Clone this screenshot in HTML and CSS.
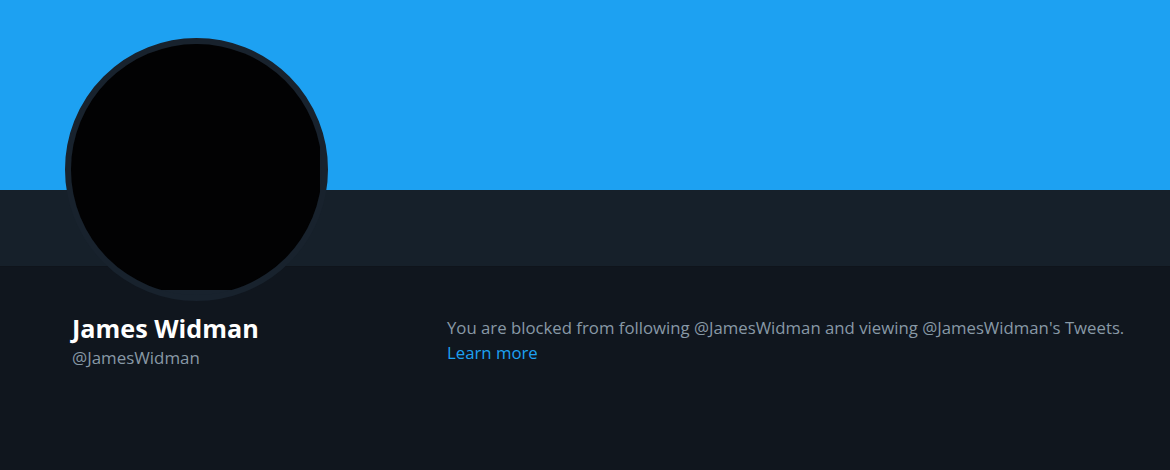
FILE: index.html
```html
<!DOCTYPE html>
<html lang="en">
<head>
<meta charset="utf-8">
<title>James Widman</title>
<link rel="stylesheet" href="styles.css">
</head>
<body>
<div class="page">
  <div class="banner"></div>
  <div class="navband"></div>
  <div class="avatar"><div class="avatar-clip"><div class="avatar-img"></div></div></div>
  <div class="content">
    <div class="profile">
      <div class="name">James Widman</div>
      <div class="handle">@JamesWidman</div>
    </div>
    <div class="notice">
      <p class="msg">You are blocked from following @JamesWidman and viewing @JamesWidman's Tweets.</p>
      <a class="learn" href="#">Learn more</a>
    </div>
  </div>
</div>
</body>
</html>
```
FILE: styles.css
```css
html, body {
  margin: 0;
  padding: 0;
  background: #10161e;
}
.page {
  position: relative;
  width: 1170px;
  height: 470px;
  overflow: hidden;
  font-family: "Open Sans", "Noto Sans", sans-serif;
  background: #10161e;
}
.banner {
  height: 190px;
  background: #1da1f2;
}
.navband {
  height: 76px;
  background: #16202a;
  border-bottom: 1px solid #0f141b;
}
.avatar {
  position: absolute;
  left: 65px;
  top: 38px;
  width: 251px;
  height: 251px;
  border: 6px solid #18222d;
  border-radius: 50%;
  background: #18222d;
}
.avatar-clip {
  width: 249px;
  height: 246px;
  overflow: hidden;
}
.avatar-img {
  width: 251px;
  height: 251px;
  border-radius: 50%;
  background: #020203;
}
.content {
  display: flex;
  padding-left: 72px;
}
.profile {
  width: 375px;
  padding-top: 45px;
}
.name {
  font-size: 25.2px;
  line-height: 32px;
  font-weight: 700;
  color: #ffffff;
}
.handle {
  margin-top: 2px;
  font-size: 16.9px;
  line-height: 24px;
  color: #8899a6;
}
.notice {
  padding-top: 48px;
}
.msg {
  margin: 0;
  font-size: 16.75px;
  line-height: 25px;
  color: #8899a6;
}
.learn {
  display: block;
  font-size: 16.75px;
  line-height: 25px;
  color: #1da1f2;
  text-decoration: none;
}
```
